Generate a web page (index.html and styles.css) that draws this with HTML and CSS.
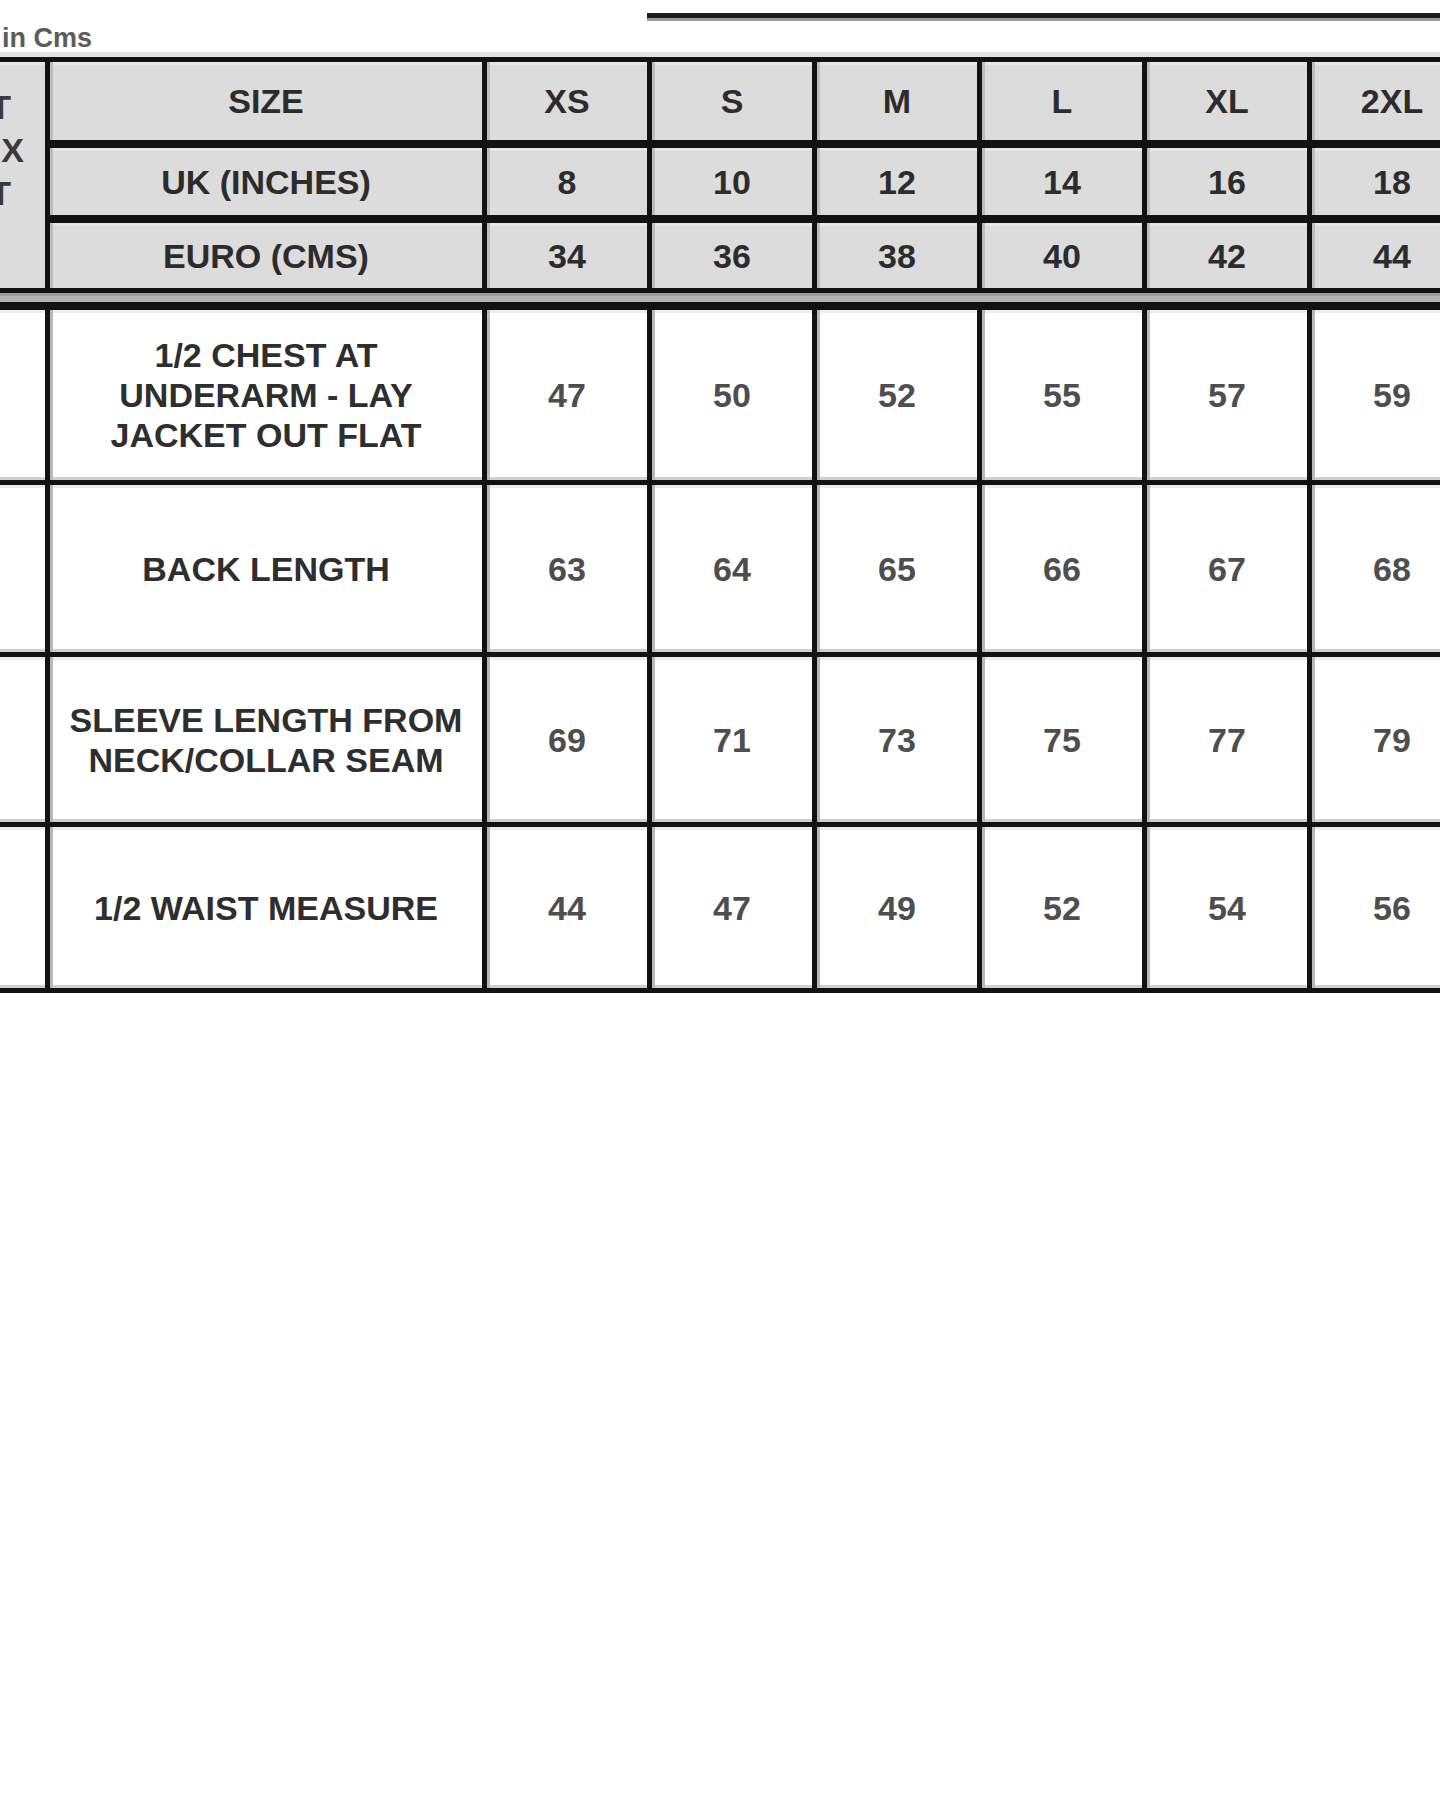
FILE: index.html
```html
<!DOCTYPE html>
<html lang="en">
<head>
<meta charset="utf-8">
<title>Size Chart</title>
<link rel="stylesheet" href="styles.css">
</head>
<body>
<div class="page">
  <div class="top">
    <span class="unit">in Cms</span>
    <span class="rule"></span>
  </div>
  <div class="chart">
    <div class="head">
      <div class="cell hd corner"><span>SHIRT<br>MATRIX<br>SKIRT</span></div>
      <div class="cell hd label">SIZE</div>
      <div class="cell hd">XS</div>
      <div class="cell hd">S</div>
      <div class="cell hd">M</div>
      <div class="cell hd">L</div>
      <div class="cell hd">XL</div>
      <div class="cell hd">2XL</div>

      <div class="cell hd label">UK (INCHES)</div>
      <div class="cell hd">8</div>
      <div class="cell hd">10</div>
      <div class="cell hd">12</div>
      <div class="cell hd">14</div>
      <div class="cell hd">16</div>
      <div class="cell hd">18</div>

      <div class="cell hd label">EURO (CMS)</div>
      <div class="cell hd">34</div>
      <div class="cell hd">36</div>
      <div class="cell hd">38</div>
      <div class="cell hd">40</div>
      <div class="cell hd">42</div>
      <div class="cell hd">44</div>
    </div>
    <div class="sep"></div>
    <div class="body">
      <div class="cell bd"></div>
      <div class="cell bd label">1/2 CHEST AT<br>UNDERARM - LAY<br>JACKET OUT FLAT</div>
      <div class="cell bd num">47</div>
      <div class="cell bd num">50</div>
      <div class="cell bd num">52</div>
      <div class="cell bd num">55</div>
      <div class="cell bd num">57</div>
      <div class="cell bd num">59</div>

      <div class="cell bd"></div>
      <div class="cell bd label">BACK LENGTH</div>
      <div class="cell bd num">63</div>
      <div class="cell bd num">64</div>
      <div class="cell bd num">65</div>
      <div class="cell bd num">66</div>
      <div class="cell bd num">67</div>
      <div class="cell bd num">68</div>

      <div class="cell bd"></div>
      <div class="cell bd label">SLEEVE LENGTH FROM<br>NECK/COLLAR SEAM</div>
      <div class="cell bd num">69</div>
      <div class="cell bd num">71</div>
      <div class="cell bd num">73</div>
      <div class="cell bd num">75</div>
      <div class="cell bd num">77</div>
      <div class="cell bd num">79</div>

      <div class="cell bd"></div>
      <div class="cell bd label">1/2 WAIST MEASURE</div>
      <div class="cell bd num">44</div>
      <div class="cell bd num">47</div>
      <div class="cell bd num">49</div>
      <div class="cell bd num">52</div>
      <div class="cell bd num">54</div>
      <div class="cell bd num">56</div>
    </div>
  </div>
</div>
</body>
</html>
```

FILE: styles.css
```css
html, body {
  margin: 0;
  padding: 0;
  background: #ffffff;
  overflow: hidden;
}

.page {
  width: 1440px;
  height: 1800px;
  overflow: hidden;
  font-family: "Liberation Sans", Arial, sans-serif;
  background: #ffffff;
}

.top {
  display: flex;
  align-items: flex-start;
  height: 52px;
  border-bottom: 5px solid #e4e4e4;
  box-sizing: content-box;
}

.unit {
  margin-top: 22px;
  margin-left: 2px;
  font-size: 27px;
  line-height: 32px;
  font-weight: bold;
  color: #5c5c5c;
}

.rule {
  margin-top: 13px;
  margin-left: auto;
  width: 793px;
  height: 5px;
  background: #1c1c1c;
  border-bottom: 3px solid #9a9a9a;
}

.chart {
  margin-left: -160px;
  width: 1632px;
  background: #121212;
  padding: 5px 0 5px 5px;
  display: flex;
  flex-direction: column;
}

.head,
.body {
  display: grid;
  grid-template-columns: 200px 432px repeat(6, 160px);
  column-gap: 5px;
}

.head {
  grid-template-rows: 78px 67px 65px;
  row-gap: 8px;
}

.body {
  grid-template-rows: 170px 167px 165px 161px;
  row-gap: 5px;
}

.sep {
  height: 22px;
  background: linear-gradient(#121212 0 5px, #9c9c9c 5px 8px, #b4b4b4 8px 14px, #121212 14px 22px);
}

.cell {
  display: flex;
  align-items: center;
  justify-content: center;
  text-align: center;
  font-size: 34px;
  line-height: 40px;
  font-weight: bold;
}

.hd {
  background: #dcdcdc;
  color: #2c2c2c;
  box-shadow: inset 3px 0 0 #bdbdbd, inset 0 3px 0 #e6e6e6;
}

.bd {
  background: #ffffff;
  color: #2e2e2e;
  box-shadow: inset 3px 0 0 #b8b8b8, inset 0 -3px 0 #d0d0d0, inset 0 3px 0 #ececec;
}

.num {
  color: #4e4e4e;
}

.corner {
  grid-row: span 3;
  align-items: flex-start;
  padding-top: 24px;
  padding-left: 30px;
  line-height: 43px;
  color: #3a3a3a;
}
```
